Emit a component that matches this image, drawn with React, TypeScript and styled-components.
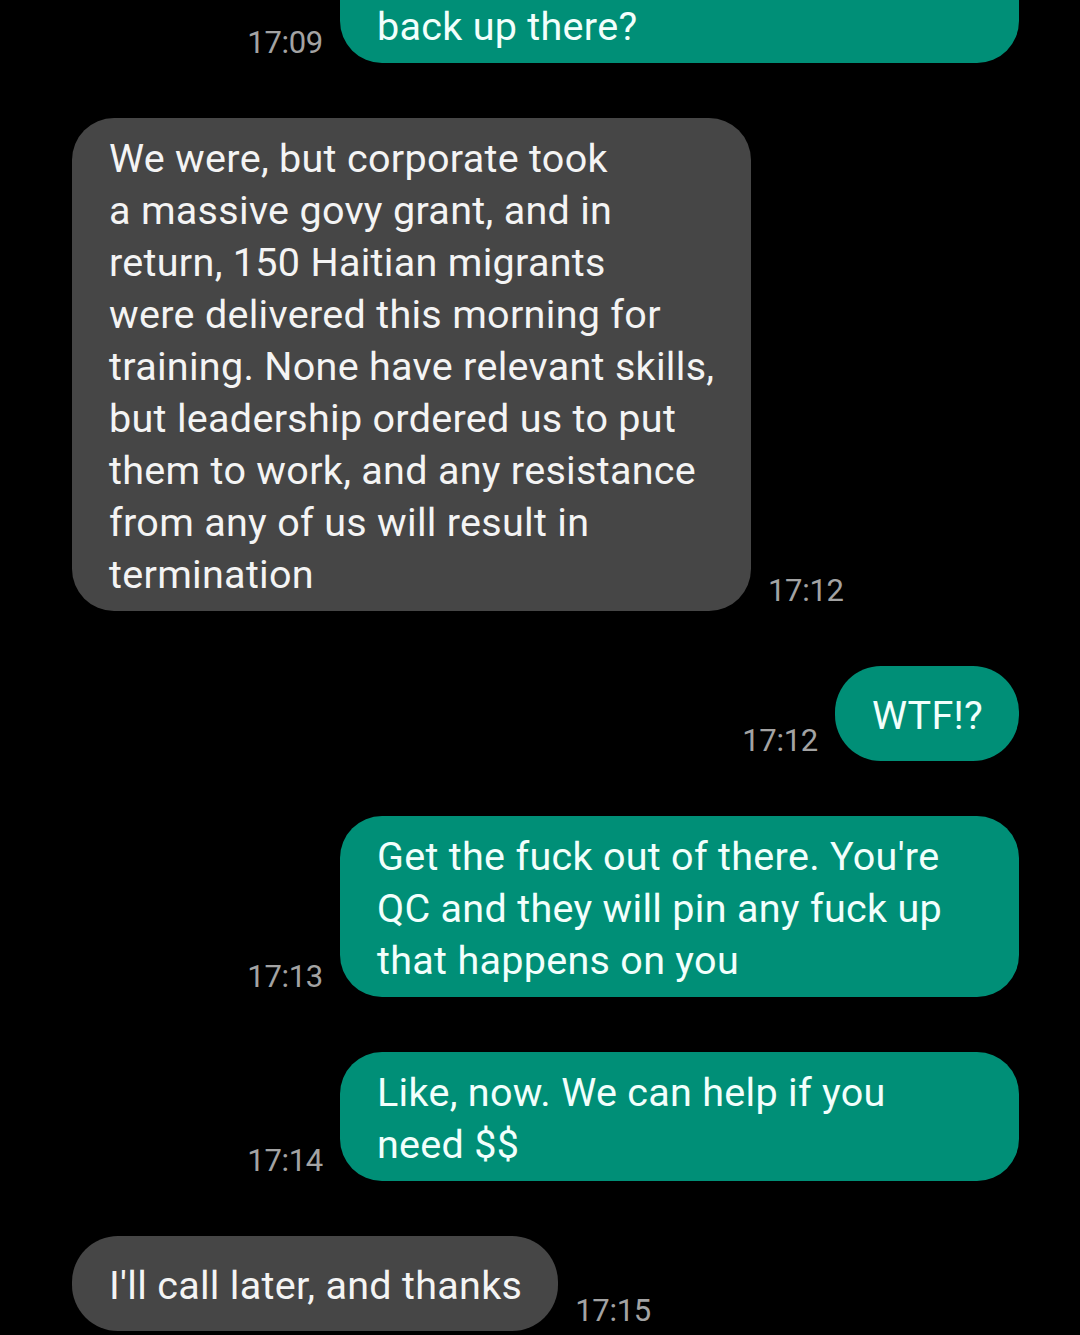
import React from 'react';
import styled, { createGlobalStyle, css } from 'styled-components';

const GlobalStyle = createGlobalStyle`
  html, body {
    margin: 0;
    padding: 0;
    background: #000000;
  }
  body {
    font-family: Roboto, "Noto Sans", "Liberation Sans", sans-serif;
    overflow: hidden;
  }
`;

type Side = 'in' | 'out';

interface Message {
  side: Side;
  lines: string[];
  time: string;
  full?: boolean;
  continued?: boolean;
}

const messages: Message[] = [
  { side: 'out', lines: ['back up there?'], time: '17:09', full: true, continued: true },
  {
    side: 'in',
    lines: [
      'We were, but corporate took',
      'a massive govy grant, and in',
      'return, 150 Haitian migrants',
      'were delivered this morning for',
      'training. None have relevant skills,',
      'but leadership ordered us to put',
      'them to work, and any resistance',
      'from any of us will result in',
      'termination',
    ],
    time: '17:12',
    full: true,
  },
  { side: 'out', lines: ['WTF!?'], time: '17:12' },
  {
    side: 'out',
    lines: [
      "Get the fuck out of there. You're",
      'QC and they will pin any fuck up',
      'that happens on you',
    ],
    time: '17:13',
    full: true,
  },
  {
    side: 'out',
    lines: ['Like, now. We can help if you', 'need $$'],
    time: '17:14',
    full: true,
  },
  { side: 'in', lines: ["I'll call later, and thanks"], time: '17:15' },
];

const Thread = styled.div`
  display: flex;
  flex-direction: column;
  gap: 55px;
  padding: 0 61px 0 72px;
  margin-top: -66px;
`;

const Row = styled.div<{ $side: Side }>`
  display: flex;
  align-items: flex-end;
  gap: 17px;
  flex-direction: ${({ $side }) => ($side === 'out' ? 'row-reverse' : 'row')};
  justify-content: flex-start;
`;

const Bubble = styled.div<{ $side: Side; $full?: boolean; $continued?: boolean }>`
  box-sizing: border-box;
  display: flex;
  flex-direction: column;
  justify-content: center;
  min-height: 95px;
  padding: 15px 36px 10px 37px;
  border-radius: 46px;
  font-size: 39.5px;
  line-height: 52px;
  letter-spacing: 0.3px;
  white-space: nowrap;
  background: ${({ $side }) => ($side === 'out' ? '#008f77' : '#464646')};
  color: ${({ $side }) => ($side === 'out' ? '#f2fffc' : '#f4f4f4')};
  ${({ $full }) =>
    $full &&
    css`
      width: 679px;
      border-radius: 42px;
    `}
  ${({ $continued }) =>
    $continued &&
    css`
      min-height: 129px;
      justify-content: flex-end;
    `}
`;

const Line = styled.span`
  display: block;
`;

const Time = styled.span`
  flex-shrink: 0;
  margin-bottom: 6px;
  font-size: 31px;
  line-height: 28px;
  color: #a3a3a3;
  letter-spacing: -0.3px;
`;

export default function App() {
  return (
    <>
      <GlobalStyle />
      <Thread>
        {messages.map((m, i) => (
          <Row key={i} $side={m.side}>
            <Bubble $side={m.side} $full={m.full} $continued={m.continued}>
              {m.lines.map((l, j) => (
                <Line key={j}>{l}</Line>
              ))}
            </Bubble>
            <Time>{m.time}</Time>
          </Row>
        ))}
      </Thread>
    </>
  );
}
